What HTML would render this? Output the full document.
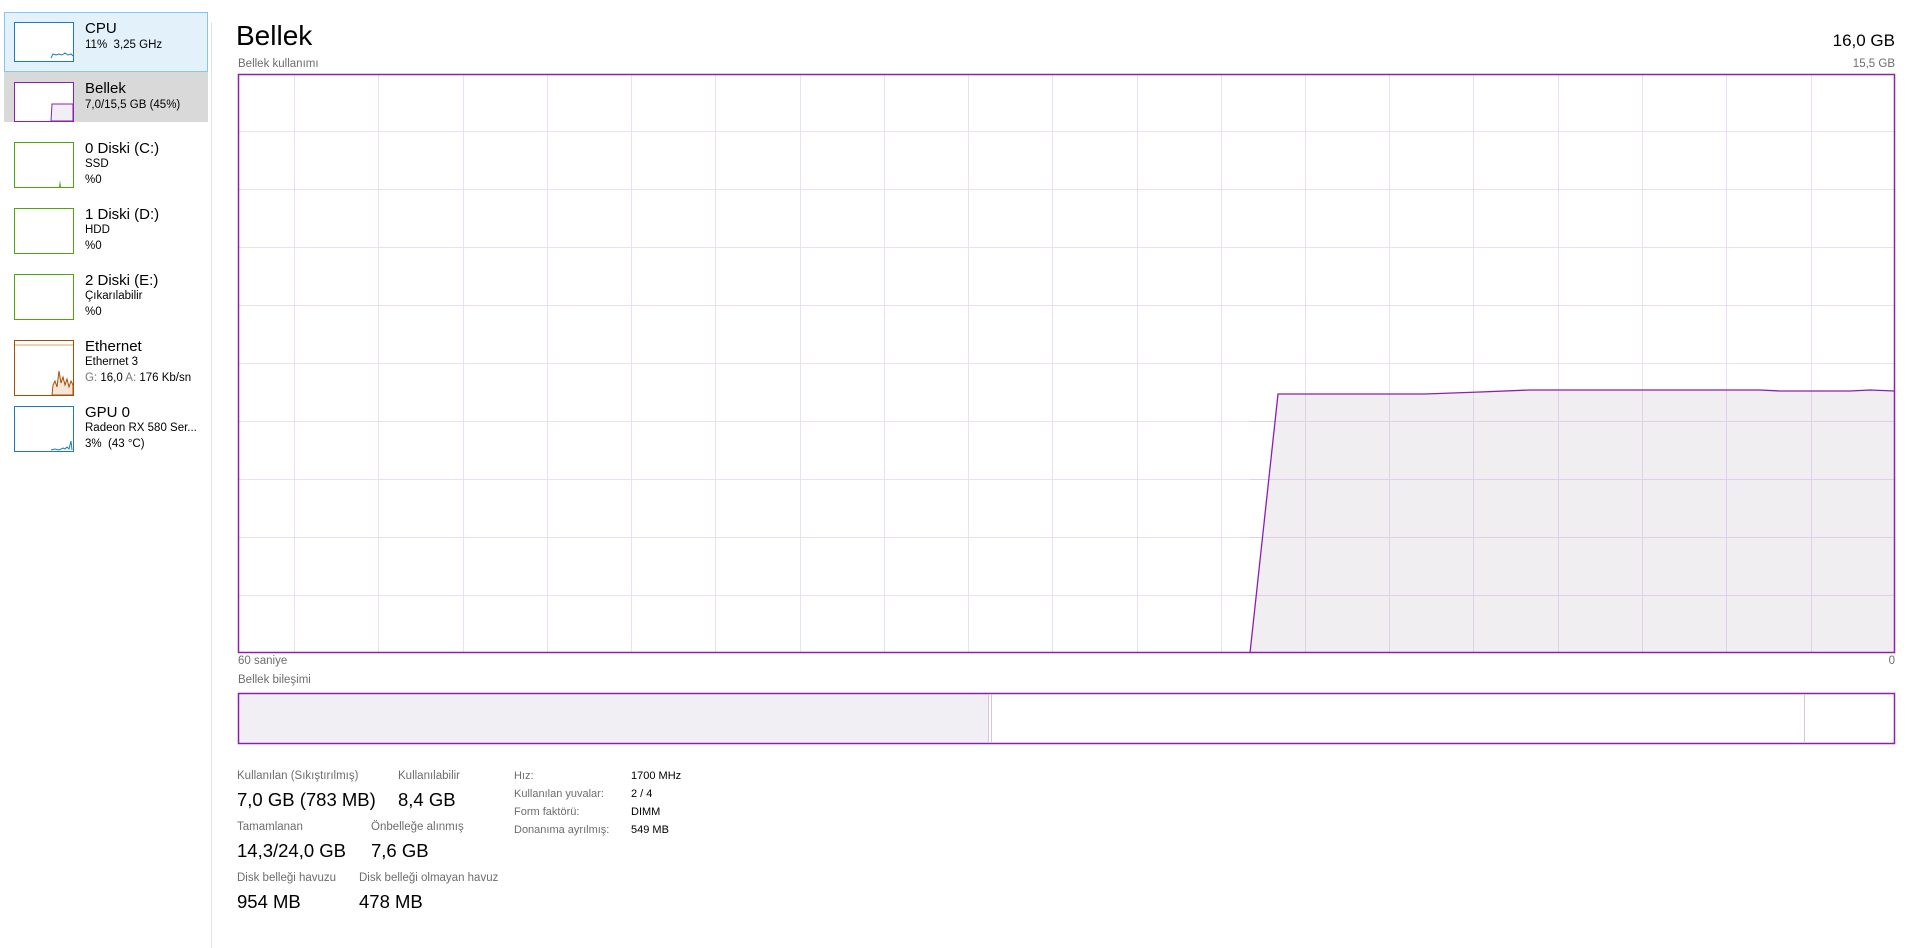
<!DOCTYPE html>
<html><head><meta charset="utf-8"><style>
*{margin:0;padding:0;box-sizing:border-box}
body{width:1920px;height:948px;background:#fff;position:relative;overflow:hidden;font-family:"Liberation Sans",sans-serif;color:#000}
.a{position:absolute;white-space:nowrap}
.t{font-size:15px}
.s{font-size:11.5px}
.th{position:absolute;left:14px;width:60px;background:#fff;border:1px solid}
.lb{font-size:11.5px;color:#6d6d6d}
.v{font-size:18.5px}
.r{font-size:11px}
</style></head><body>
<!-- sidebar -->
<div class="a" style="left:4px;top:12px;width:204px;height:60px;background:#e3f1fa;border:1px solid #86c6ec"></div>
<div class="a" style="left:4px;top:72px;width:204px;height:50px;background:#d9d9d9"></div>
<div class="a" style="left:211px;top:22px;width:1px;height:926px;background:#e3e3e3"></div>

<div class="th" style="top:22px;height:40px;border-color:#1b7bbd">
<svg width="58" height="38" style="position:absolute;left:0;top:0"><polyline points="36,35 38,31 41,32 44,31 47,32 50,30 53,32 56,31 58,33" fill="none" stroke="#1b7bbd" stroke-width="1"/></svg></div>
<div class="a t" style="left:85px;top:20px">CPU</div>
<div class="a s" style="left:85px;top:39px">11%&nbsp; 3,25 GHz</div>

<div class="th" style="top:82px;height:40px;border-color:#8b1fb3">
<svg width="58" height="38" style="position:absolute;left:0;top:0"><path d="M36,38 L37,21 L58,21 L58,38Z" fill="#f1eff3" stroke="#8b1fb3" stroke-width="1"/></svg></div>
<div class="a t" style="left:85px;top:80px">Bellek</div>
<div class="a s" style="left:85px;top:99px">7,0/15,5 GB (45%)</div>

<div class="th" style="top:142px;height:46px;border-color:#4da60c">
<svg width="58" height="44" style="position:absolute;left:0;top:0"><path d="M44,44 L45,37 L46,44Z" fill="#4da60c"/></svg></div>
<div class="a t" style="left:85px;top:140px">0 Diski (C:)</div>
<div class="a s" style="left:85px;top:158px">SSD</div>
<div class="a s" style="left:85px;top:174px">%0</div>

<div class="th" style="top:208px;height:46px;border-color:#4da60c"></div>
<div class="a t" style="left:85px;top:206px">1 Diski (D:)</div>
<div class="a s" style="left:85px;top:224px">HDD</div>
<div class="a s" style="left:85px;top:240px">%0</div>

<div class="th" style="top:274px;height:46px;border-color:#4da60c"></div>
<div class="a t" style="left:85px;top:272px">2 Diski (E:)</div>
<div class="a s" style="left:85px;top:290px">Çıkarılabilir</div>
<div class="a s" style="left:85px;top:306px">%0</div>

<div class="th" style="top:340px;height:56px;border-color:#a74f01">
<svg width="58" height="54" style="position:absolute;left:0;top:0"><line x1="0" y1="4" x2="58" y2="4" stroke="#d9a37a"/><path d="M37,54 L38,44 L40,40 L42,46 L44,30 L46,42 L48,36 L50,44 L52,38 L54,46 L56,40 L58,44 L58,54Z" fill="#f6e6da" stroke="#a74f01" stroke-width="1"/></svg></div>
<div class="a t" style="left:85px;top:338px">Ethernet</div>
<div class="a s" style="left:85px;top:356px">Ethernet 3</div>
<div class="a s" style="left:85px;top:372px"><span style="color:#777">G:</span> 16,0 <span style="color:#777">A:</span> 176 Kb/sn</div>

<div class="th" style="top:406px;height:46px;border-color:#1b7bbd">
<svg width="58" height="44" style="position:absolute;left:0;top:0"><polyline points="36,43 40,42 44,43 48,41 50,42 52,40 54,42 56,34 57,43" fill="none" stroke="#1b7bbd" stroke-width="1"/></svg></div>
<div class="a t" style="left:85px;top:404px">GPU 0</div>
<div class="a s" style="left:85px;top:422px">Radeon RX 580 Ser...</div>
<div class="a s" style="left:85px;top:438px">3%&nbsp; (43 °C)</div>

<!-- header -->
<div class="a" style="left:236px;top:20px;font-size:28px">Bellek</div>
<div class="a" style="right:25px;top:31px;font-size:17px">16,0 GB</div>
<div class="a" style="left:238px;top:58px;font-size:11.5px;color:#6d6d6d">Bellek kullanımı</div>
<div class="a" style="right:25px;top:58px;font-size:11.5px;color:#6d6d6d">15,5 GB</div>

<svg class="a" style="left:0;top:0" width="1920" height="948">
<g stroke="#ecdff2" stroke-width="1">
<line x1="238" y1="131.5" x2="1895" y2="131.5"/><line x1="238" y1="189.5" x2="1895" y2="189.5"/><line x1="238" y1="247.5" x2="1895" y2="247.5"/><line x1="238" y1="305.5" x2="1895" y2="305.5"/><line x1="238" y1="363.5" x2="1895" y2="363.5"/><line x1="238" y1="421.5" x2="1895" y2="421.5"/><line x1="238" y1="479.5" x2="1895" y2="479.5"/><line x1="238" y1="537.5" x2="1895" y2="537.5"/><line x1="238" y1="595.5" x2="1895" y2="595.5"/>
<line x1="294.5" y1="74" x2="294.5" y2="653"/><line x1="378.5" y1="74" x2="378.5" y2="653"/><line x1="463.5" y1="74" x2="463.5" y2="653"/><line x1="547.5" y1="74" x2="547.5" y2="653"/><line x1="631.5" y1="74" x2="631.5" y2="653"/><line x1="715.5" y1="74" x2="715.5" y2="653"/><line x1="800.5" y1="74" x2="800.5" y2="653"/><line x1="884.5" y1="74" x2="884.5" y2="653"/><line x1="968.5" y1="74" x2="968.5" y2="653"/><line x1="1052.5" y1="74" x2="1052.5" y2="653"/><line x1="1137.5" y1="74" x2="1137.5" y2="653"/><line x1="1221.5" y1="74" x2="1221.5" y2="653"/><line x1="1305.5" y1="74" x2="1305.5" y2="653"/><line x1="1389.5" y1="74" x2="1389.5" y2="653"/><line x1="1473.5" y1="74" x2="1473.5" y2="653"/><line x1="1558.5" y1="74" x2="1558.5" y2="653"/><line x1="1642.5" y1="74" x2="1642.5" y2="653"/><line x1="1726.5" y1="74" x2="1726.5" y2="653"/><line x1="1811.5" y1="74" x2="1811.5" y2="653"/>
</g>
<path d="M1250,653 L1278,394 L1425,394 L1480,392 L1530,390 L1555,390 L1760,390 L1780,391 L1850,391 L1870,390 L1895,391 L1895,653Z" fill="rgba(120,90,130,0.1)" stroke="none"/>
<g stroke="#e0cfe6" stroke-width="1">
<line x1="1250" y1="421.5" x2="1895" y2="421.5"/><line x1="1250" y1="479.5" x2="1895" y2="479.5"/><line x1="1250" y1="537.5" x2="1895" y2="537.5"/><line x1="1250" y1="595.5" x2="1895" y2="595.5"/>
</g>
<polyline points="1250,653 1278,394 1425,394 1480,392 1530,390 1555,390 1760,390 1780,391 1850,391 1870,390 1895,391" fill="none" stroke="#8b1fb3" stroke-width="1.3"/>
<rect x="238.5" y="74.5" width="1656" height="578" fill="none" stroke="#8b1fb3" stroke-width="1.5"/>
<rect x="238.5" y="693.5" width="1656" height="50" fill="#fff" stroke="#8b1fb3" stroke-width="1.5"/>
<rect x="239.5" y="694.5" width="749" height="48" fill="#f1eff3"/>
<line x1="988.5" y1="694" x2="988.5" y2="743" stroke="#d8c4e0"/>
<line x1="991.5" y1="694" x2="991.5" y2="743" stroke="#d8c4e0"/>
<line x1="1804.5" y1="694" x2="1804.5" y2="743" stroke="#d8c4e0"/>
</svg>
<div class="a" style="left:238px;top:655px;font-size:11.5px;color:#6d6d6d">60 saniye</div>
<div class="a" style="right:25px;top:655px;font-size:11.5px;color:#6d6d6d">0</div>
<div class="a" style="left:238px;top:674px;font-size:11.5px;color:#6d6d6d">Bellek bileşimi</div>

<!-- stats -->
<div class="a lb" style="left:237px;top:770px">Kullanılan (Sıkıştırılmış)</div>
<div class="a v" style="left:237px;top:789px">7,0 GB (783 MB)</div>
<div class="a lb" style="left:398px;top:770px">Kullanılabilir</div>
<div class="a v" style="left:398px;top:789px">8,4 GB</div>
<div class="a lb" style="left:237px;top:821px">Tamamlanan</div>
<div class="a v" style="left:237px;top:840px">14,3/24,0 GB</div>
<div class="a lb" style="left:371px;top:821px">Önbelleğe alınmış</div>
<div class="a v" style="left:371px;top:840px">7,6 GB</div>
<div class="a lb" style="left:237px;top:872px">Disk belleği havuzu</div>
<div class="a v" style="left:237px;top:891px">954 MB</div>
<div class="a lb" style="left:359px;top:872px">Disk belleği olmayan havuz</div>
<div class="a v" style="left:359px;top:891px">478 MB</div>

<div class="a r" style="left:514px;top:770px;color:#6d6d6d">Hız:</div>
<div class="a r" style="left:631px;top:770px">1700 MHz</div>
<div class="a r" style="left:514px;top:788px;color:#6d6d6d">Kullanılan yuvalar:</div>
<div class="a r" style="left:631px;top:788px">2 / 4</div>
<div class="a r" style="left:514px;top:806px;color:#6d6d6d">Form faktörü:</div>
<div class="a r" style="left:631px;top:806px">DIMM</div>
<div class="a r" style="left:514px;top:824px;color:#6d6d6d">Donanıma ayrılmış:</div>
<div class="a r" style="left:631px;top:824px">549 MB</div>
</body></html>
